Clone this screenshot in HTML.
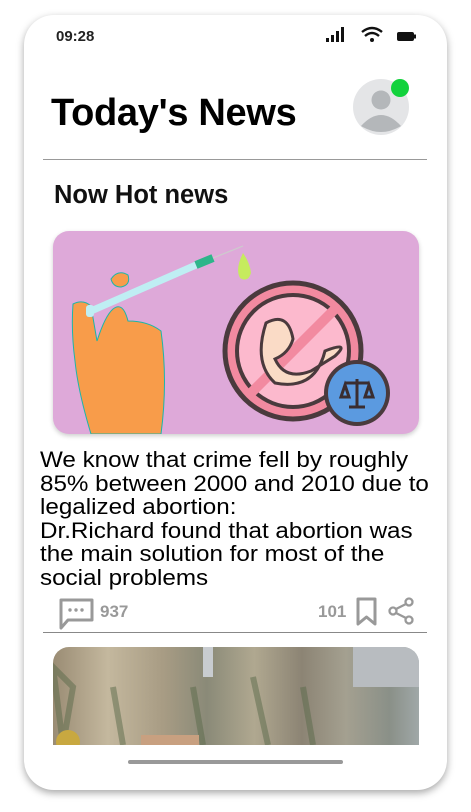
<!DOCTYPE html>
<html><head><style>
*{margin:0;padding:0;box-sizing:border-box}
body{width:471px;height:812px;background:#fff;position:relative;overflow:hidden;font-family:"Liberation Sans",sans-serif}
.phone{position:absolute;left:24px;top:15px;width:423px;height:775px;background:#fff;border-radius:30px;box-shadow:0 3px 8px rgba(0,0,0,.35)}
.abs{position:absolute}
</style></head><body>
<div class="phone"></div>
<div class="abs" style="left:56px;top:28px;font-size:15px;font-weight:bold;color:#222">09:28</div>
<svg class="abs" style="left:324px;top:26px" width="96" height="20">
<rect x="2" y="12" width="3" height="4" fill="#111"/><rect x="7" y="9" width="3" height="7" fill="#111"/><rect x="12" y="5" width="3" height="11" fill="#111"/><rect x="17" y="1" width="3" height="15" fill="#111"/>
<path d="M38 6 Q48 -2 58 6" stroke="#111" stroke-width="2.4" fill="none"/><path d="M41 10 Q48 4 55 10" stroke="#111" stroke-width="2.4" fill="none"/><circle cx="48" cy="14" r="2" fill="#111"/>
<rect x="73" y="6" width="17" height="9" rx="2" fill="#111"/><rect x="90" y="8.5" width="2" height="4" fill="#111"/>
</svg>
<div class="abs" style="left:51px;top:92px;font-size:38px;font-weight:bold;color:#000;letter-spacing:-0.3px">Today's News</div>
<svg class="abs" style="left:352px;top:76px" width="64" height="62">
<circle cx="29" cy="31" r="28" fill="#e4e5e7"/>
<circle cx="29" cy="24" r="9.5" fill="#b4b7ba"/>
<path d="M9 50 Q29 28 49 50 Q29 62 9 50Z" fill="#b4b7ba"/>
<circle cx="48" cy="12" r="9" fill="#12d23c"/>
</svg>
<div class="abs" style="left:43px;top:159px;width:384px;height:1px;background:#999"></div>
<div class="abs" style="left:54px;top:181px;font-size:25.5px;font-weight:bold;color:#111">Now Hot news</div>
<div class="abs" style="left:53px;top:231px;width:366px;height:203px;background:#dea9d9;border-radius:16px;overflow:hidden;box-shadow:0 2px 5px rgba(0,0,0,.2)">
<svg width="366" height="203">
<path d="M20 73 Q30 68 38 75 L44 110 Q52 85 60 78 Q70 70 75 90 Q95 90 108 100 Q115 150 108 203 L38 203 Q25 160 22 130 Q18 100 20 73Z" fill="#f89c4a" stroke="#1bb7a8" stroke-width="1"/>
<path d="M58 48 Q65 38 75 44 Q78 54 68 56 Q60 56 58 48Z" fill="#f89c4a" stroke="#1bb7a8"/>
<line x1="38" y1="80" x2="143" y2="34" stroke="#bfeef3" stroke-width="7"/>
<rect x="33" y="74" width="8" height="12" rx="3" fill="#bfeef3"/>
<line x1="143" y1="34" x2="160" y2="27" stroke="#2db58a" stroke-width="8"/>
<line x1="160" y1="27" x2="190" y2="15" stroke="#ccc" stroke-width="1.2"/>
<path d="M190 22 Q182 38 187 47 Q195 52 198 42 Q197 32 190 22Z" fill="#c6eb5e"/>
<circle cx="240" cy="120" r="68" fill="#f28aa0" stroke="#4a3a3d" stroke-width="5"/>
<circle cx="240" cy="120" r="56" fill="#fcb9cd" stroke="#4a3a3d" stroke-width="4"/>
<line x1="198" y1="162" x2="283" y2="77" stroke="#f28aa0" stroke-width="10"/>
<path d="M213 92 Q235 80 240 108 Q236 122 222 128 Q232 150 258 140 L282 125 Q298 110 272 120 Q262 160 222 152 Q200 132 213 92Z" fill="#fadbc6" stroke="#4a3a3d" stroke-width="3"/>
<circle cx="304" cy="162" r="33" fill="#4a3a3d"/>
<circle cx="304" cy="162" r="29" fill="#5b9ae0"/>
<path d="M292 152 H316 M304 148 V176 M296 176 H312 M288 166 L292 154 L296 166Z M312 166 L316 154 L320 166Z" stroke="#3a2d30" stroke-width="3" fill="none"/>
</svg></div>
<div class="abs" style="left:40px;top:448px;font-size:22px;line-height:23.6px;color:#000;transform:scaleX(1.1);transform-origin:0 0;white-space:nowrap">We know that crime fell by roughly<br>85% between 2000 and 2010 due to<br>legalized abortion:<br>Dr.Richard found that abortion was<br>the main solution for most of the<br>social problems</div>
<svg class="abs" style="left:59px;top:598px" width="36" height="32">
<path d="M2 2 H33 V22 H9 L2 30Z" fill="none" stroke="#999" stroke-width="3" stroke-linejoin="round"/>
<circle cx="11" cy="12" r="1.7" fill="#999"/><circle cx="17" cy="12" r="1.7" fill="#999"/><circle cx="23" cy="12" r="1.7" fill="#999"/>
</svg>
<div class="abs" style="left:100px;top:602px;font-size:17px;font-weight:bold;color:#999">937</div>
<div class="abs" style="left:318px;top:602px;font-size:17px;font-weight:bold;color:#999">101</div>
<svg class="abs" style="left:355px;top:597px" width="62" height="30">
<path d="M3 2 H20 V27 L11.5 20 L3 27Z" fill="none" stroke="#999" stroke-width="3" stroke-linejoin="round"/>
<circle cx="54" cy="5" r="3.5" fill="none" stroke="#999" stroke-width="2.3"/>
<circle cx="38" cy="14" r="3.5" fill="none" stroke="#999" stroke-width="2.3"/>
<circle cx="54" cy="23" r="3.5" fill="none" stroke="#999" stroke-width="2.3"/>
<path d="M41 12 L51 7 M41 16 L51 21" stroke="#999" stroke-width="2.3"/>
</svg>
<div class="abs" style="left:43px;top:632px;width:384px;height:1px;background:#888"></div>
<div class="abs" style="left:53px;top:647px;width:366px;height:98px;border-radius:16px 16px 0 0;overflow:hidden;background:linear-gradient(90deg,#9a8c74 0%,#c4b89e 15%,#a89c84 30%,#8a8a78 42%,#b0a890 55%,#8c8474 68%,#a4a090 80%,#8a9088 92%,#a0a8a8 100%)">
<svg width="366" height="98">
<rect x="150" y="0" width="10" height="30" fill="#c8ccd0"/>
<rect x="300" y="0" width="66" height="40" fill="#b8bcc0"/>
<path d="M0 20 L20 40 L10 98 Z M60 40 L70 98 M140 40 L150 98 M200 30 L215 98 M250 40 L260 98" stroke="#5a6a4a" stroke-width="6" fill="none" opacity=".5"/>
<rect x="88" y="88" width="58" height="10" fill="#c8a080"/>
<circle cx="15" cy="95" r="12" fill="#c8a840"/>
</svg></div>
<div class="abs" style="left:128px;top:760px;width:215px;height:4px;background:#999;border-radius:2px"></div>
</body></html>
